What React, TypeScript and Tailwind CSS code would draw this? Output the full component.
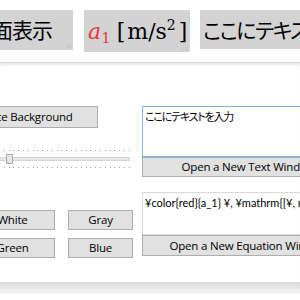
import React, { useState } from 'react';

const ui = { fontFamily: '"Open Sans", Lato, sans-serif' };
const eqFont = { fontFamily: 'Lato, "Noto Sans", sans-serif' };
const jp = { fontFamily: '"Noto Sans CJK JP", sans-serif' };
const jpProp = { fontFamily: '"Noto Sans CJK JP", sans-serif', fontFeatureSettings: '"palt"' };
const serif = { fontFamily: '"DejaVu Serif", "Liberation Serif", serif' };

const Grip = () => (
  <svg className="absolute right-[1px] bottom-[1px]" width="6" height="6" viewBox="0 0 6 6">
    <rect x="4" y="0" width="1" height="1" fill="#b8b8b8" />
    <rect x="2" y="2" width="1" height="1" fill="#b8b8b8" />
    <rect x="4" y="2" width="1" height="1" fill="#b8b8b8" />
    <rect x="0" y="4" width="1" height="1" fill="#b8b8b8" />
    <rect x="2" y="4" width="1" height="1" fill="#b8b8b8" />
    <rect x="4" y="4" width="1" height="1" fill="#b8b8b8" />
  </svg>
);

const WinButton = ({ label, className }: { label: string; className: string }) => (
  <button
    className={`bg-[#e1e1e1] border border-[#adadad] text-[11.5px] tracking-[-0.2px] text-black leading-none flex items-center justify-center whitespace-nowrap ${className}`}
    style={ui}
  >
    {label}
  </button>
);

const Ticks = () => (
  <div className="flex justify-between h-[1px]">
    {Array.from({ length: 34 }).map((_, i) => (
      <span key={i} className="w-[1px] h-[1px] bg-[#9a9a9a]" />
    ))}
  </div>
);

const App: React.FC = () => {
  const [text, setText] = useState('ここにテキストを入力');
  const [eq, setEq] = useState('¥color{red}{a_1} ¥, ¥mathrm{[¥, m/s^2 ¥, ]}');

  return (
    <div className="w-[300px] h-[300px] overflow-hidden bg-white relative">
      {/* preview strip */}
      <div className="flex items-start pt-[10px] h-[62px] -ml-[25px]">
        <div className="relative shrink-0 bg-[#d3d3d3] h-[40px] w-[98px] flex items-center">
          <span className="-ml-[3px] text-[21px] text-black tracking-[-1px] whitespace-nowrap" style={jp}>画面表示</span>
          <Grip />
        </div>
        <div className="relative shrink-0 bg-[#d3d3d3] h-[42px] w-[106px] ml-[11px] flex items-center pl-[4px]">
          <span className="text-[22px] text-black whitespace-nowrap" style={serif}>
            <i className="text-[#e8393f]">a</i>
            <span className="text-[15px] text-[#e8393f] relative top-[4px]">1</span>
            <span className="ml-[6px]">[</span>
            <span className="ml-[2px]">m/s</span>
            <span className="text-[14px] relative -top-[9px]">2</span>
            <span className="ml-[3px]">]</span>
          </span>
          <Grip />
        </div>
        <div className="relative shrink-0 bg-[#d3d3d3] h-[39px] w-[150px] ml-[10px] flex items-center pl-[3px]">
          <span className="text-[21px] tracking-[-1.5px] text-black whitespace-nowrap" style={jpProp}>ここにテキストを入力</span>
        </div>
      </div>

      {/* control panel */}
      <div className="border-t border-[#d4d4d4] h-[220px] bg-white shadow-[inset_0_3px_3px_-1px_rgba(0,0,0,0.08)]">
        <div className="flex -ml-[30px] pt-[43px]">
          <div className="w-[163px] shrink-0 flex flex-col">
            <WinButton label="Update Background" className="-ml-[26px] w-[154px] h-[22px]" />
            <div className="mt-[22px] w-[160px] flex flex-col gap-[4px] relative">
              <Ticks />
              <div className="h-[4px] bg-[#e7e7e7] border border-[#d6d6d6] my-[2px]" />
              <Ticks />
              <div className="absolute left-[36px] top-[4px] w-[7px] h-[10px] bg-[#e6e6e6] border border-[#acacac]" />
            </div>
            <div className="mt-[42px] grid grid-cols-[85px_65px] gap-x-[13px] gap-y-[8px]">
              <WinButton label="White" className="h-[20px]" />
              <WinButton label="Gray" className="h-[20px]" />
              <WinButton label="Green" className="h-[20px]" />
              <WinButton label="Blue" className="h-[20px]" />
            </div>
          </div>
          <div className="ml-[9px] w-[213px] shrink-0 flex flex-col">
            <textarea
              value={text}
              onChange={(e) => setText(e.target.value)}
              className="h-[51px] border border-[#7eb4ea] px-[2px] py-[1px] text-[11px] tracking-[-1.2px] text-black resize-none outline-none leading-[16px]"
              style={jpProp}
            />
            <WinButton label="Open a New Text Window" className="h-[20px] w-full" />
            <textarea
              value={eq}
              onChange={(e) => setEq(e.target.value)}
              className="mt-[15px] h-[43px] border border-[#d9d9d9] px-[2px] py-[2px] text-[11px] text-black resize-none outline-none leading-[16px] whitespace-nowrap overflow-hidden"
              style={eqFont}
            />
            <WinButton label="Open a New Equation Window" className="h-[21px] w-full" />
          </div>
        </div>
      </div>
      <div className="h-[12px] bg-gradient-to-b from-[#d9d9d9] to-[#f7f7f7]" />
    </div>
  );
};

export default App;
